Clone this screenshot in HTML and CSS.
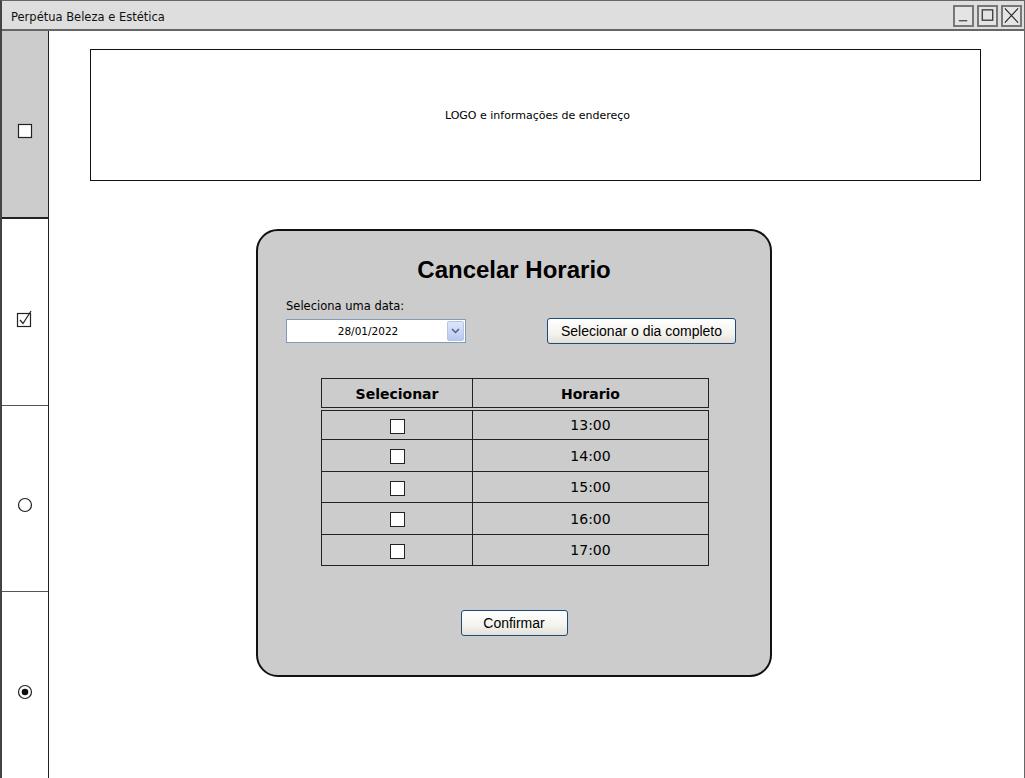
FILE: index.html
```html
<!DOCTYPE html>
<html lang="pt">
<head>
<meta charset="utf-8">
<title>Perpétua Beleza e Estética</title>
<link rel="stylesheet" href="styles.css">
</head>
<body>
<div class="window">
  <div class="titlebar">
    <span class="title">Perpétua Beleza e Estética</span>
    <div class="winbtns">
      <span class="winbtn"><svg width="18" height="19" viewBox="0 0 18 19"><path d="M4 15h9" stroke="#555" stroke-width="1.5"/></svg></span>
      <span class="winbtn"><svg width="18" height="19" viewBox="0 0 18 19"><rect x="3.5" y="3.5" width="11" height="11" fill="none" stroke="#444" stroke-width="1.5"/></svg></span>
      <span class="winbtn"><svg width="18" height="19" viewBox="0 0 18 19"><path d="M2 2L16 17M16 2L2 17" stroke="#222" stroke-width="1.2"/></svg></span>
    </div>
  </div>
  <div class="body">
    <nav class="sidebar">
      <div class="tab active"><svg width="16" height="16" viewBox="0 0 16 16"><rect x="1.5" y="1.5" width="13" height="13" fill="#fff" stroke="#222" stroke-width="1.2"/></svg></div>
      <div class="tab"><svg width="18" height="18" viewBox="0 0 18 18"><rect x="1.5" y="3.5" width="13" height="13" fill="#fff" stroke="#222" stroke-width="1.2"/><path d="M4 10l3 3.5L15 1" fill="none" stroke="#222" stroke-width="1.2"/></svg></div>
      <div class="tab"><svg width="16" height="16" viewBox="0 0 16 16"><circle cx="8" cy="8" r="6.5" fill="#fff" stroke="#222" stroke-width="1.2"/></svg></div>
      <div class="tab"><svg width="16" height="16" viewBox="0 0 16 16"><circle cx="8" cy="8" r="6.5" fill="#fff" stroke="#222" stroke-width="1.2"/><circle cx="8" cy="8" r="3.3" fill="#111"/></svg></div>
    </nav>
    <main class="content">
      <header class="logo-box">LOGO e informações de endereço</header>
      <section class="panel">
        <h1 class="panel-title">Cancelar Horario</h1>
        <div class="controls">
          <div class="date-group">
            <label class="date-label">Seleciona uma data:</label>
            <div class="select">
              <span class="select-value">28/01/2022</span>
              <span class="select-arrow"><svg width="9" height="6" viewBox="0 0 9 6"><path d="M1 1l3.5 3.5L8 1" fill="none" stroke="#4d6185" stroke-width="1.5"/></svg></span>
            </div>
          </div>
          <button class="btn btn-wide">Selecionar o dia completo</button>
        </div>
        <table class="grid">
          <thead>
            <tr><th class="c1">Selecionar</th><th>Horario</th></tr>
          </thead>
          <tbody>
            <tr><td class="c1"><span class="cb"></span></td><td>13:00</td></tr>
            <tr><td class="c1"><span class="cb"></span></td><td>14:00</td></tr>
            <tr><td class="c1"><span class="cb"></span></td><td>15:00</td></tr>
            <tr><td class="c1"><span class="cb"></span></td><td>16:00</td></tr>
            <tr><td class="c1"><span class="cb"></span></td><td>17:00</td></tr>
          </tbody>
        </table>
        <div class="confirm-row"><button class="btn btn-confirm">Confirmar</button></div>
      </section>
    </main>
  </div>
</div>
</body>
</html>
```
FILE: styles.css
```css
* { box-sizing: border-box; }
html, body { margin: 0; padding: 0; background: #fff; }
body { font-family: "Liberation Sans", Arial, sans-serif; color: #000; }

.window {
  width: 1025px;
  height: 778px;
  border-left: 2px solid #444;
  border-top: 1px solid #666;
  border-right: 1px solid #666;
  display: flex;
  flex-direction: column;
  overflow: hidden;
}

.titlebar {
  height: 30px;
  flex: none;
  background: #dedede;
  border-bottom: 2px solid #666;
  display: flex;
  align-items: center;
  justify-content: space-between;
  padding-left: 9px;
  padding-right: 2px;
}
.title { color: #111; font-family: "DejaVu Sans", "Liberation Sans", sans-serif; font-size: 11.5px; padding-top: 3px; }
.winbtns { display: flex; gap: 3px; margin-top: 1px; }
.winbtn {
  width: 21px; height: 22px;
  border: 2px solid #777;
  background: #e4e4e4;
  display: flex; align-items: center; justify-content: center;
}
.winbtn svg { display: block; }

.body { flex: 1; display: flex; min-height: 0; }

.sidebar {
  width: 47px;
  flex: none;
  border-right: 1px solid #222;
  display: flex;
  flex-direction: column;
}
.tab {
  flex: 1;
  display: flex; align-items: center; justify-content: center;
  padding-top: 14px;
  border-bottom: 1px solid #555;
}
.tab:last-child { border-bottom: none; }
.tab.active { background: #cccccc; border-bottom: 2px solid #222; }
.tab svg { display: block; }

.content {
  flex: 1;
  padding: 18px 44px 0 41px;
  display: flex;
  flex-direction: column;
  align-items: flex-start;
}

.logo-box {
  width: 891px;
  height: 132px;
  border: 1px solid #111;
  display: flex; align-items: center; justify-content: center;
  font-family: "DejaVu Sans", sans-serif;
  font-size: 11px;
  padding-left: 4px;
}

.panel {
  margin-top: 48px;
  margin-left: 166px;
  width: 516px;
  height: 448px;
  background: #cccccc;
  border: 2px solid #111;
  border-radius: 22px;
  padding: 24px 34px 0 28px;
  display: flex;
  flex-direction: column;
}
.panel-title {
  margin: 0;
  text-align: center;
  font-size: 24px;
  font-weight: bold;
  line-height: 30px;
  padding-left: 6px;
}

.controls {
  margin-top: 14px;
  display: flex;
  justify-content: space-between;
  align-items: flex-end;
}
.date-group { display: flex; flex-direction: column; }
.date-label { font-family: "DejaVu Sans", sans-serif; font-size: 11.5px; line-height: 14px; margin-bottom: 6px; }
.select {
  width: 180px; height: 24px;
  background: #fff;
  border: 1px solid #7f9db9;
  display: flex; align-items: center;
}
.select-value { flex: 1; text-align: center; font-family: "DejaVu Sans", sans-serif; font-size: 10.5px; padding-left: 2px; }
.select-arrow {
  width: 17px; height: 20px; margin-right: 1px;
  background: linear-gradient(#dde6fb, #b8c8f0);
  border: 1px solid #b4c4ea;
  border-radius: 2px;
  display: flex; align-items: center; justify-content: center;
}

.btn {
  font-family: "Liberation Sans", Arial, sans-serif;
  font-size: 14px;
  color: #000;
  background: linear-gradient(#ffffff 0%, #f4f3ee 60%, #e2e0d6 100%);
  border: 1px solid #1c4b7e;
  border-radius: 3px;
  height: 26px;
  padding: 0;
}
.btn-wide { width: 189px; margin-bottom: -1px; }
.btn-confirm { width: 107px; }

.grid {
  margin: 35px 0 0 35px;
  width: 388px;
  border-collapse: collapse;
  font-family: "DejaVu Sans", sans-serif;
  font-size: 14px;
}
.grid th, .grid td {
  border: 1px solid #222;
  text-align: center;
  padding: 0;
}
.grid .c1 { width: 151px; }
.grid th { height: 30px; font-weight: bold; font-size: 14px; padding-top: 3px; }
.grid thead tr { border-bottom: 4px double #222; }
.grid td { height: 31.4px; padding-top: 1px; }
.cb {
  display: inline-block;
  width: 15px; height: 15px;
  background: #fff;
  border: 1px solid #222;
  vertical-align: middle;
}

.confirm-row { margin-top: 44px; display: flex; justify-content: center; padding-left: 6px; }
```
